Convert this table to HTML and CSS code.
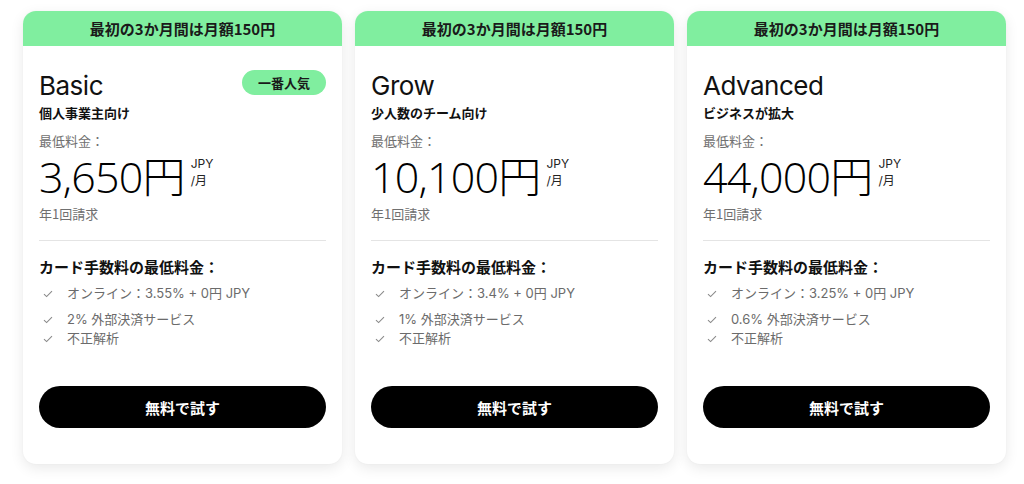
FILE: index.html
```html
<!DOCTYPE html>
<html lang="ja">
<head>
<meta charset="utf-8">
<link rel="stylesheet" href="styles.css">
</head>
<body>
<div class="plans">
  <section class="card">
    <div class="promo">最初の3か月間は月額150円</div>
    <div class="body">
      <div class="title-row">
        <h2 class="name">Basic</h2>
        <span class="badge">一番人気</span>
      </div>
      <p class="sub">個人事業主向け</p>
      <p class="label">最低料金：</p>
      <div class="price"><span class="amount">3,650円</span><span class="unit">JPY<br>/月</span></div>
      <p class="billing">年1回請求</p>
      <hr class="divider">
      <h3 class="fees-title">カード手数料の最低料金：</h3>
      <ul class="fees">
        <li class="first"><svg viewBox="0 0 10 8"><path d="M1 4.2 3.6 6.6 9 1.2"/></svg>オンライン：3.55% + 0円 JPY</li>
        <li><svg viewBox="0 0 10 8"><path d="M1 4.2 3.6 6.6 9 1.2"/></svg>2% 外部決済サービス</li>
        <li><svg viewBox="0 0 10 8"><path d="M1 4.2 3.6 6.6 9 1.2"/></svg>不正解析</li>
      </ul>
      <button class="cta">無料で試す</button>
    </div>
  </section>
  <section class="card">
    <div class="promo">最初の3か月間は月額150円</div>
    <div class="body">
      <div class="title-row">
        <h2 class="name">Grow</h2>
      </div>
      <p class="sub">少人数のチーム向け</p>
      <p class="label">最低料金：</p>
      <div class="price"><span class="amount">10,100円</span><span class="unit">JPY<br>/月</span></div>
      <p class="billing">年1回請求</p>
      <hr class="divider">
      <h3 class="fees-title">カード手数料の最低料金：</h3>
      <ul class="fees">
        <li class="first"><svg viewBox="0 0 10 8"><path d="M1 4.2 3.6 6.6 9 1.2"/></svg>オンライン：3.4% + 0円 JPY</li>
        <li><svg viewBox="0 0 10 8"><path d="M1 4.2 3.6 6.6 9 1.2"/></svg>1% 外部決済サービス</li>
        <li><svg viewBox="0 0 10 8"><path d="M1 4.2 3.6 6.6 9 1.2"/></svg>不正解析</li>
      </ul>
      <button class="cta">無料で試す</button>
    </div>
  </section>
  <section class="card">
    <div class="promo">最初の3か月間は月額150円</div>
    <div class="body">
      <div class="title-row">
        <h2 class="name">Advanced</h2>
      </div>
      <p class="sub">ビジネスが拡大</p>
      <p class="label">最低料金：</p>
      <div class="price"><span class="amount">44,000円</span><span class="unit">JPY<br>/月</span></div>
      <p class="billing">年1回請求</p>
      <hr class="divider">
      <h3 class="fees-title">カード手数料の最低料金：</h3>
      <ul class="fees">
        <li class="first"><svg viewBox="0 0 10 8"><path d="M1 4.2 3.6 6.6 9 1.2"/></svg>オンライン：3.25% + 0円 JPY</li>
        <li><svg viewBox="0 0 10 8"><path d="M1 4.2 3.6 6.6 9 1.2"/></svg>0.6% 外部決済サービス</li>
        <li><svg viewBox="0 0 10 8"><path d="M1 4.2 3.6 6.6 9 1.2"/></svg>不正解析</li>
      </ul>
      <button class="cta">無料で試す</button>
    </div>
  </section>
</div>
</body>
</html>
```

FILE: styles.css
```css
* { box-sizing: border-box; }
html, body { margin: 0; background: #ffffff; }
body {
  font-family: Inter, "Noto Sans CJK JP", sans-serif;
  color: #111;
  width: 1024px;
  height: 484px;
  overflow: hidden;
}
.plans {
  display: flex;
  gap: 13px;
  padding: 11px 0 0 23px;
}
.card {
  width: 319px;
  height: 453px;
  background: #fff;
  border-radius: 13px;
  overflow: hidden;
  box-shadow: 0 4px 14px rgba(0,0,0,0.09), 0 0 2px rgba(0,0,0,0.04);
  display: flex;
  flex-direction: column;
}
.promo {
  height: 35px;
  background: #80ee9f;
  display: flex;
  align-items: center;
  justify-content: center;
  font-size: 15px;
  font-weight: 700;
  color: #1a1a1a;
  font-family: "Noto Sans CJK JP", sans-serif;
}
.body {
  flex: 1;
  padding: 24px 16px 0 16px;
  display: flex;
  flex-direction: column;
}
.title-row {
  display: flex;
  justify-content: space-between;
  align-items: flex-start;
  height: 32px;
}
.name {
  margin: 0;
  font-size: 26px;
  font-weight: 400;
  line-height: 32px;
  letter-spacing: -0.5px;
}
.badge {
  background: #80ee9f;
  border-radius: 13px;
  height: 25px;
  width: 84px;
  display: flex;
  align-items: center;
  justify-content: center;
  font-size: 13px;
  font-weight: 700;
  color: #1a1a1a;
  font-family: "Noto Sans CJK JP", sans-serif;
}
.sub {
  margin: 1px 0 0;
  font-size: 13px;
  font-weight: 700;
  line-height: 20px;
  font-family: "Noto Sans CJK JP", sans-serif;
}
.label {
  margin: 8px 0 0;
  font-size: 13px;
  line-height: 20px;
  color: #707070;
  font-family: "Noto Sans CJK JP", sans-serif;
}
.price {
  display: flex;
  align-items: flex-start;
  margin-top: 2px;
}
.amount {
  font-family: "Open Sans", "Noto Sans CJK JP", sans-serif;
  font-size: 43px;
  line-height: 48px;
  font-weight: 300;
  letter-spacing: -0.8px;
  color: #000;
}
.unit {
  font-size: 12px;
  line-height: 17px;
  margin-left: 6px;
  margin-top: 2px;
  color: #222;
}
.billing {
  margin: 3px 0 0;
  font-size: 13px;
  line-height: 20px;
  color: #707070;
  font-family: "Noto Sans CJK JP", sans-serif;
}
.divider {
  border: 0;
  border-top: 1px solid #e4e4e4;
  margin: 16px 0 0;
}
.fees-title {
  margin: 15px 0 0;
  font-size: 15px;
  font-weight: 700;
  line-height: 22px;
  font-family: "Noto Sans CJK JP", sans-serif;
}
.fees {
  list-style: none;
  margin: 6px 0 0;
  padding: 0;
}
.fees li {
  display: flex;
  align-items: center;
  font-size: 13px;
  line-height: 19px;
  color: #6b6b6b;
  font-family: Inter, "Noto Sans CJK JP", sans-serif;
}
.fees li.first { margin-bottom: 7px; }
.fees svg {
  width: 10px;
  height: 8px;
  margin: 0 14px 0 4px;
  fill: none;
  stroke: #8a8a8a;
  stroke-width: 1.1;
}
.cta {
  margin-top: auto;
  margin-bottom: 36px;
  height: 42px;
  width: 100%;
  border: 0;
  border-radius: 21px;
  background: #000;
  color: #fff;
  font-size: 15px;
  font-weight: 700;
  font-family: "Noto Sans CJK JP", sans-serif;
}
```
